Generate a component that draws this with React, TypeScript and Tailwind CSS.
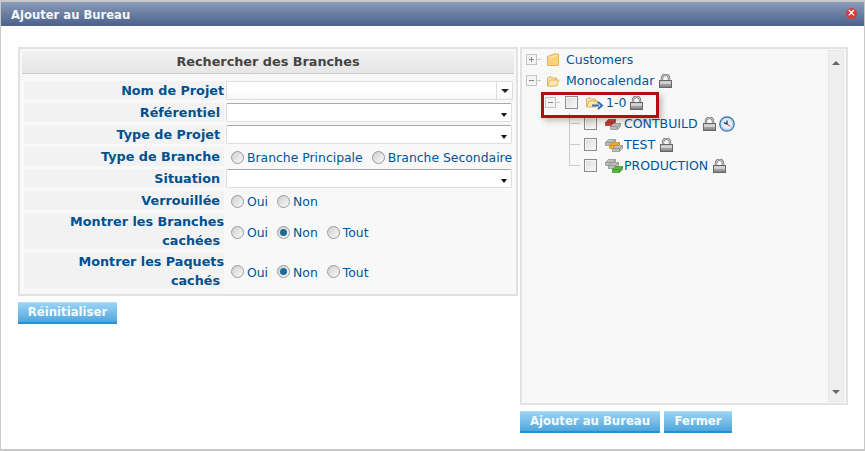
const Lock = () => (
  <svg width="13" height="14" viewBox="0 0 13 14" className="shrink-0">
    <defs>
      <linearGradient id="lockBody" x1="0" y1="0" x2="0" y2="1">
        <stop offset="0" stopColor="#d8d8d8" />
        <stop offset="1" stopColor="#777" />
      </linearGradient>
    </defs>
    <path d="M3 6.5V4a3.5 3.2 0 0 1 7 0v2.5" fill="none" stroke="#6f6f6f" strokeWidth="2.4" />
    <path d="M3 6.5V4a3.5 3.2 0 0 1 7 0v2.5" fill="none" stroke="#d4d4d4" strokeWidth="1" />
    <rect x="0.5" y="6.5" width="12" height="7" fill="url(#lockBody)" stroke="#666" />
    <path d="M1 9h11" stroke="#eee" />
    <path d="M1 11.5h11" stroke="#9a9a9a" />
  </svg>
);

const Clock = () => (
  <svg width="16" height="16" viewBox="0 0 16 16" className="shrink-0">
    <circle cx="8" cy="8" r="7.2" fill="#bcd6ee" stroke="#3d6fa8" strokeWidth="1.2" />
    <circle cx="8" cy="8" r="5" fill="#e4f0fa" />
    <path d="M8 4.5V8L4.8 6.6" fill="none" stroke="#1f2c3d" strokeWidth="1.2" />
    <path d="M8 8l3.2 2.2" stroke="#d23c3c" />
  </svg>
);

const Folder = ({ open }: { open?: boolean }) => (
  <svg width="14" height="14" viewBox="0 0 14 14" className="shrink-0">
    {open ? (
      <>
        <path d="M1.5 12V4l1-1h3l1 1h4v2" fill="#f8e3ad" stroke="#dcb35c" />
        <path d="M1.5 12l2.5-6h9l-2.5 6z" fill="#fbe7b0" stroke="#e0b24f" />
      </>
    ) : (
      <>
        <path d="M1.5 12.5V3.5l6-2.5h5v11.5z" fill="#f9d377" stroke="#e6b34f" />
        <path d="M3 5l8-3" stroke="#fcedc0" />
      </>
    )}
  </svg>
);

const Slab = ({ x, y, color, edge }: { x: number; y: number; color: string; edge: string }) => (
  <g transform={`translate(${x} ${y})`}>
    <path d="M0.5 3.5L3.5 0.5H10.5L7.5 3.5z" fill={color} stroke={edge} strokeWidth="0.7" />
    <path d="M0.5 3.5H7.5V6.5H0.5z" fill={color} stroke={edge} strokeWidth="0.7" />
    <path d="M7.5 3.5L10.5 0.5V3.5L7.5 6.5z" fill={color} stroke={edge} strokeWidth="0.7" />
  </g>
);

const GREY = { color: "#bdbdbd", edge: "#8c8c8c" };

const Stack = ({ kind }: { kind: "red" | "orange" | "green" }) => (
  <svg width="19" height="15" viewBox="0 0 19 15" className="shrink-0">
    {kind === "red" && (
      <>
        <Slab x={1} y={3} color="#c93a3a" edge="#a12a2a" />
        <Slab x={6} y={7} {...GREY} />
      </>
    )}
    {kind === "orange" && (
      <>
        <Slab x={1} y={2} {...GREY} />
        <Slab x={5} y={5} color="#f7ac22" edge="#cf8712" />
        <Slab x={8} y={8} {...GREY} />
      </>
    )}
    {kind === "green" && (
      <>
        <Slab x={1} y={1} {...GREY} />
        <Slab x={4} y={4} {...GREY} />
        <Slab x={8} y={8} color="#55bb3c" edge="#3c8f28" />
      </>
    )}
  </svg>
);

const Toggle = ({ open }: { open?: boolean }) => (
  <span className="flex h-[11px] w-[11px] shrink-0 items-center justify-center border border-[#c4c4c4] bg-[#f4f4f4]">
    <span className="relative block h-px w-[5px] bg-[#888]">
      {!open && <span className="absolute left-[2px] top-[-2px] h-[5px] w-px bg-[#888]" />}
    </span>
  </span>
);

const Check = () => (
  <span className="block h-[13px] w-[13px] shrink-0 border border-[#8a8a8a] bg-gradient-to-br from-[#dcdcdc] to-[#f8f8f8] shadow-[inset_0_0_0_1px_#f4f4f4]" />
);

const Radio = ({ checked }: { checked?: boolean }) => (
  <span className="flex h-[13px] w-[13px] shrink-0 items-center justify-center rounded-full border border-[#9a9a9a] bg-gradient-to-br from-[#cfcfcf] to-[#fafafa]">
    {checked && <span className="block h-[7px] w-[7px] rounded-full bg-[#1d6a94]" />}
  </span>
);

const RadioOpt = ({ label, checked }: { label: string; checked?: boolean }) => (
  <span className="flex items-center gap-[3px]">
    <Radio checked={checked} />
    <span className="mt-[2px] text-[12.4px] text-[#00549b]">{label}</span>
  </span>
);

const Select = ({ first }: { first?: boolean }) => (
  <div
    className={
      first
        ? "flex h-[19px] w-[287px] items-center justify-end border border-[#ddd] bg-gradient-to-b from-white via-white to-[#f6f6f6]"
        : "flex h-[19px] w-[286px] items-center justify-end rounded-[2px] border border-[#ddd] border-t-[#aaa] bg-white"
    }
  >
    {first ? (
      <span className="flex h-full w-[16px] items-center justify-center border-l border-[#ddd]">
        <span className="border-x-[4px] border-t-[4px] border-x-transparent border-t-[#222]" />
      </span>
    ) : (
      <span className="mr-[4px] mt-[4px] border-x-[3.5px] border-t-[4px] border-x-transparent border-t-[#111]" />
    )}
  </div>
);

type RowProps = { label: string[]; pad?: boolean; h: string; children: React.ReactNode };

const Row = ({ label, pad, h, children }: RowProps) => (
  <div className={`flex gap-[2px] ${h}`}>
    <div
      className={`flex w-[200px] shrink-0 flex-col items-end justify-center bg-[#f2f2f2] text-[12.75px] font-bold leading-[19px] text-[#00508f] ${
        pad ? "" : "pr-[4px]"
      }`}
    >
      {label.map((l, i) => (
        <span key={l} className={label.length > 1 && i === 1 ? "pr-[4px]" : ""}>
          {l}
        </span>
      ))}
    </div>
    <div className="flex items-center">{children}</div>
  </div>
);

const Radios = ({ low, children }: { low?: boolean; children: React.ReactNode }) => (
  <div className={`flex gap-[9px] pl-[5px] ${low ? "pt-[3px]" : "pt-[1px]"}`}>{children}</div>
);

const Btn = ({ children, w }: { children: string; w: string }) => (
  <button
    className={`flex h-[22px] ${w} items-center justify-center border-b-2 border-b-[#2a8fd0] border-t border-t-[#a9def8] bg-gradient-to-b from-[#9ad3f5] to-[#4ea6dc] text-[11.7px] font-bold text-[#f4fbff]`}
  >
    {children}
  </button>
);

const TreeLabel = ({ children }: { children: string }) => (
  <span className="text-[12.5px] leading-[21px] text-[#00549b]">{children}</span>
);

const leaves = [
  { name: "CONTBUILD", kind: "red" as const, clock: true },
  { name: "TEST", kind: "orange" as const },
  { name: "PRODUCTION", kind: "green" as const },
];

export default function App() {
  return (
    <div className="flex h-[451px] w-[865px] flex-col overflow-hidden border-x border-b-2 border-t-2 border-[#c8c8c8] bg-white font-['DejaVu_Sans',sans-serif]">
      <div className="flex h-[24px] shrink-0 items-center justify-between bg-gradient-to-b from-[#8a9cbb] to-[#4c6189] pl-[10px] pr-[7px]">
        <span className="pt-[3px] text-[11.6px] font-bold text-[#f5f7fa]">Ajouter au Bureau</span>
        <span className="mb-[2px] flex h-[11px] w-[11px] items-center justify-center rounded-full bg-[#d93a3a] text-[10px] font-bold leading-none text-white">
          ×
        </span>
      </div>

      <div className="flex gap-[2px] pl-[17px] pt-[21px]">
        <div className="flex flex-col gap-[6px]">
          <div className="h-[249px] w-[500px] border-2 border-[#e2e2e2] bg-[#f8f8f8] px-[2px] pt-[2px]">
            <div className="flex h-[23px] w-[492px] items-center justify-center border-b border-[#ccc] bg-gradient-to-b from-[#f2f2f2] to-[#e6e6e6] text-[12.8px] font-bold text-[#444]">
              Rechercher des Branches
            </div>
            <div className="mt-[7px] flex flex-col gap-[3px] pl-[2px]">
              <Row label={["Nom de Projet"]} pad h="h-[19px]">
                <Select first />
              </Row>
              <Row label={["Référentiel"]} h="h-[19px]">
                <Select />
              </Row>
              <Row label={["Type de Projet"]} h="h-[19px]">
                <Select />
              </Row>
              <Row label={["Type de Branche"]} h="h-[19px]">
                <Radios>
                  <RadioOpt label="Branche Principale" />
                  <RadioOpt label="Branche Secondaire" />
                </Radios>
              </Row>
              <Row label={["Situation"]} h="h-[19px]">
                <Select />
              </Row>
              <Row label={["Verrouillée"]} h="h-[19px]">
                <Radios>
                  <RadioOpt label="Oui" />
                  <RadioOpt label="Non" />
                </Radios>
              </Row>
              <Row label={["Montrer les Branches", "cachées"]} pad h="h-[36px]">
                <Radios low>
                  <RadioOpt label="Oui" />
                  <RadioOpt label="Non" checked />
                  <RadioOpt label="Tout" />
                </Radios>
              </Row>
              <Row label={["Montrer les Paquets", "cachés"]} pad h="h-[37px]">
                <Radios low>
                  <RadioOpt label="Oui" />
                  <RadioOpt label="Non" checked />
                  <RadioOpt label="Tout" />
                </Radios>
              </Row>
            </div>
          </div>
          <Btn w="w-[99px]">Réinitialiser</Btn>
        </div>

        <div className="flex flex-col gap-[6px]">
          <div className="relative flex h-[358px] w-[328px] border-2 border-[#e2e2e2] bg-[#f8f8f8] pb-[1px] pl-[1px] pr-[2px]">
            <div className="flex-1 pl-[3px]">
              <div className="flex h-[21px] items-center">
                <Toggle />
                <span className="h-px w-[4px] bg-[#ccc]" />
                <span className="ml-[5px] mr-[6px]">
                  <Folder />
                </span>
                <TreeLabel>Customers</TreeLabel>
              </div>
              <div className="flex h-[21px] items-center">
                <Toggle open />
                <span className="h-px w-[4px] bg-[#ccc]" />
                <span className="ml-[5px] mr-[6px]">
                  <Folder open />
                </span>
                <TreeLabel>Monocalendar</TreeLabel>
                <span className="ml-[5px]">
                  <Lock />
                </span>
              </div>
              <div className="mt-[1px] flex h-[21px] items-center pl-[19px]">
                <Toggle open />
                <span className="h-px w-[4px] bg-[#ccc]" />
                <span className="ml-[5px] mr-[7px]">
                  <Check />
                </span>
                <span className="relative mr-[2px] h-[15px] w-[19px]">
                  <Folder open />
                  <svg width="12" height="9" viewBox="0 0 12 9" className="absolute bottom-0 right-0">
                    <path d="M0 4.5h7M6 1l4 3.5L6 8" fill="none" stroke="#2f6fbe" strokeWidth="2" />
                  </svg>
                </span>
                <TreeLabel>1-0</TreeLabel>
                <span className="ml-[4px]">
                  <Lock />
                </span>
              </div>
              {leaves.map((r, i) => (
                <div key={r.name} className="flex h-[21px] items-center pl-[43px]">
                  <span className="flex h-full w-[11px] flex-col">
                    <span className="h-[11px] border-b border-l border-[#ccc]" />
                    {i < leaves.length - 1 && <span className="flex-1 border-l border-[#ccc]" />}
                  </span>
                  <span className="ml-[4px] mr-[7px]">
                    <Check />
                  </span>
                  <span className="mr-[1px]">
                    <Stack kind={r.kind} />
                  </span>
                  <TreeLabel>{r.name}</TreeLabel>
                  <span className="ml-[5px]">
                    <Lock />
                  </span>
                  {r.clock && (
                    <span className="ml-[3px]">
                      <Clock />
                    </span>
                  )}
                </div>
              ))}
            </div>
            <div className="mt-[1px] flex w-[16px] flex-col justify-between border border-[#e6e6e6] bg-[#efefef]">
              <span className="flex h-[18px] items-center justify-center pt-[5px]">
                <span className="border-x-[4px] border-b-[4px] border-x-transparent border-b-[#666]" />
              </span>
              <span className="flex h-[18px] items-center justify-center">
                <span className="border-x-[4px] border-t-[4px] border-x-transparent border-t-[#666]" />
              </span>
            </div>
            <div className="absolute left-[19px] top-[43px] h-[26px] w-[118px] border-[3px] border-[#b01010] shadow-[3px_3px_6px_rgba(60,60,40,0.3)]" />
          </div>
          <div className="flex gap-[4px]">
            <Btn w="w-[140px]">Ajouter au Bureau</Btn>
            <Btn w="w-[68px]">Fermer</Btn>
          </div>
        </div>
      </div>
    </div>
  );
}
